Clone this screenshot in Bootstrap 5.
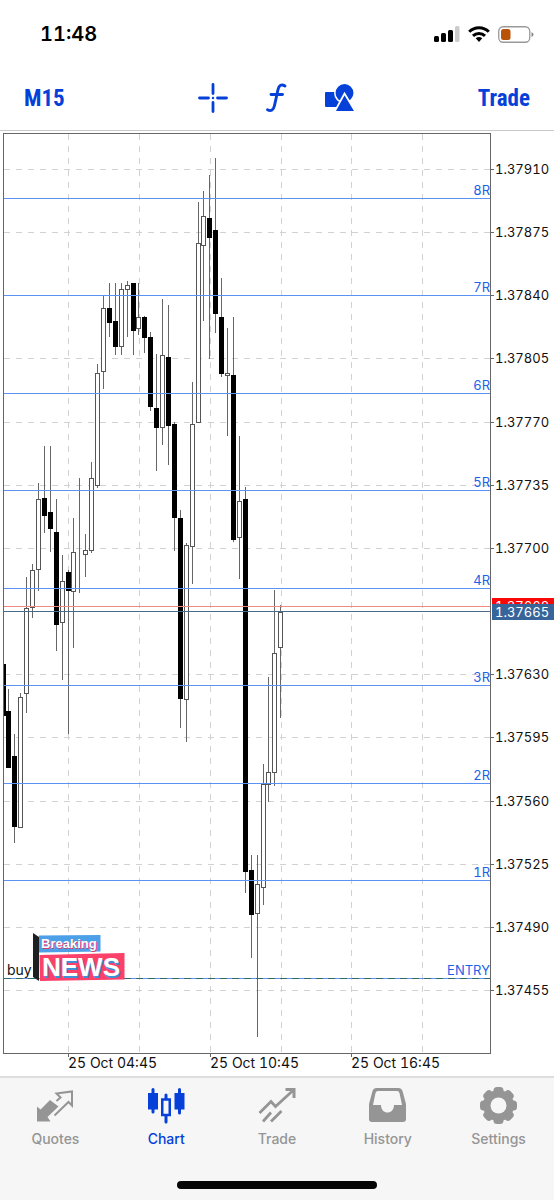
<!DOCTYPE html>
<html lang="en">
<head>
<meta charset="utf-8">
<meta name="viewport" content="width=device-width, initial-scale=1">
<title>Chart</title>
<link href="https://cdn.jsdelivr.net/npm/bootstrap@5.3.0/dist/css/bootstrap.min.css" rel="stylesheet">
<style>
  body { font-family: Inter, "Liberation Sans", sans-serif; color: #000; }
  .status-row { height: 68px; padding: 0 20px 0 40px; }
  .clock { font-size: 20px; line-height: 24px; font-weight: 600; font-variant-numeric: tabular-nums; }
  .tool-row { height: 63px; padding: 0 24px 2px; border-bottom: 1px solid #c9c9cb; }
  .tool-btn { color: #0540d9; line-height: 24px; }
  .tool-text { font-family: "Liberation Sans Narrow", "Roboto Condensed", Roboto, sans-serif; font-size: 23px; font-weight: 700; }
  .side { flex: 1 1 0; }
  .tools { gap: 32px; }
  .chart text { font-size: 14px; fill: #111; font-variant-numeric: tabular-nums; }
  .chart .price { font-size: 13px; }
  .chart .level { font-size: 13px; fill: #1a62e8; }
  .chart .tag { fill: #fff; }
  .chart .banner { font-family: "Liberation Sans", sans-serif; font-weight: 700; fill: #fff; }
  .chart .banner-top { font-size: 13px; text-shadow: 1px 1px 0 #d8416b; }
  .chart .banner-main { font-size: 26px; text-shadow: 1px 2px 0 #3f8fd8; }
  .tab-row { background: #f6f6f6; border-top: 2px solid #dedee0; }
  .tab-link { color: #959595; font-size: 14px; line-height: 20px; font-weight: 500; padding: 8px 0 0; gap: 3px; }
  .tab-link.active { color: #0540d9; }
  .home-bar { width: 36%; height: 8px; background: #050505; margin: 32px auto 11px; }
</style>
</head>
<body class="bg-white d-flex flex-column min-vh-100">
<header>
  <div class="status-row d-flex align-items-center justify-content-between">
    <span class="clock">11:48</span>
    <div class="d-flex align-items-center gap-2">
      <svg width="26" height="16" viewBox="0 0 26 16" role="img" aria-label="Signal">
        <rect x="0" y="10" width="5" height="6" rx="1.5"/><rect x="7" y="7" width="5" height="9" rx="1.5"/><rect x="14" y="4" width="5" height="12" rx="1.5"/><rect x="21" y="0" width="4.500" height="16" rx="1.500" fill="#ccc"/>
      </svg>
      <svg width="22" height="16" viewBox="0 0 22 16" role="img" aria-label="Wi-Fi">
        <g fill="none" stroke="#000" stroke-width="3"><path d="M1.200 5.800C6.500 .3 15.500 .3 20.800 5.800"/><path d="M5 9.900C8.300 6.600 13.700 6.600 17 9.900"/></g><path d="M7.700 12.300Q11 9.600 14.300 12.300L11 16Z"/>
      </svg>
      <svg width="36" height="17" viewBox="0 0 36 17" role="img" aria-label="Battery">
        <rect x=".75" y=".75" width="31" height="15.500" rx="4.500" fill="none" stroke="#999" stroke-width="1.300"/><rect x="3" y="3" width="9.500" height="11" rx="2.500" fill="#b95308"/><path d="M33.500 6v5q2-1 2-2.500T33.500 6" fill="#888"/>
      </svg>
    </div>
  </div>
  <div class="tool-row d-flex align-items-center">
    <div class="side"><button type="button" class="btn p-0 border-0 tool-btn tool-text">M15</button></div>
    <div class="tools d-flex align-items-center">
      <button type="button" class="btn p-0 border-0 tool-btn d-flex" aria-label="Crosshair">
        <svg width="32" height="32" viewBox="0 0 32 32" fill="none" stroke="currentColor" stroke-width="2.800" stroke-linecap="round"><path d="M16 2.500v9M16 20.500v9M2.500 16h9M20.500 16h9"/><circle cx="16" cy="16" r="1.200" fill="currentColor" stroke="none"/></svg>
      </button>
      <button type="button" class="btn p-0 border-0 tool-btn d-flex" aria-label="Indicators">
        <svg width="32" height="32" viewBox="0 0 32 32" fill="none" stroke="currentColor" stroke-width="2.900" stroke-linecap="round"><path d="M24 4C20.500 1.700 17.900 3.300 17 7.500L13.500 23.500C12.500 28 10 29.800 6.500 27.800M10 12.500H21.500"/></svg>
      </button>
      <button type="button" class="btn p-0 border-0 tool-btn d-flex" aria-label="Objects">
        <svg width="32" height="32" viewBox="0 0 32 32" fill="currentColor"><rect x="0" y="10" width="16" height="15" rx="1"/><circle cx="19.500" cy="11" r="9.700" stroke="#fff" stroke-width="1.500"/><path d="M19.500 11.500L30.500 29.800H9.500Z" stroke="#fff" stroke-width="1.800"/></svg>
      </button>
    </div>
    <div class="side text-end"><button type="button" class="btn p-0 border-0 tool-btn tool-text">Trade</button></div>
  </div>
</header>

<main class="flex-grow-1">
  <svg class="chart w-100 d-block" viewBox="0 131 554 945" role="img" aria-label="M15 price chart">
    <g id="grid" stroke="#d2d2d2" stroke-dasharray="6 6"></g>
    <g id="candles" stroke-width="1"></g>
    <g id="levels"></g>
    <path d="M4 606.500H490" stroke="#f08a84"/>
    <path d="M4 611.500H490" stroke="#4a6c8c"/>
    <path d="M4 978.500H490" stroke="#2f6b6b" stroke-dasharray="7 5"/>
    <rect x="3.500" y="133.500" width="487" height="920" fill="none" stroke="#666"/>
    <g id="axis"></g>
    <g>
      <rect x="492" y="598" width="62" height="16" fill="#f80808"/>
      <text class="price tag" x="495" y="611">1.37668</text>
      <rect x="492" y="604" width="62" height="16" fill="#37659a"/>
      <text class="price tag" x="495" y="617">1.37665</text>
    </g>
    <g>
      <text x="7" y="975">buy</text>
      <path d="M33 933l6 4v44l-6-4z" fill="#1d1f21"/>
      <path d="M39 935.500l61.500-.5v16.500L39 952.500z" fill="#4da0e8"/>
      <path d="M39.500 955l85-2v26.500L40 981z" fill="#fb4169"/>
      <text class="banner banner-top" x="41" y="948">Breaking</text>
      <text class="banner banner-main" x="42" y="976">NEWS</text>
    </g>
  </svg>
</main>

<footer class="tab-row">
  <nav class="row g-0 text-center">
    <a href="#quotes" class="col tab-link text-decoration-none d-flex flex-column align-items-center">
      <svg width="40" height="40" viewBox="0 0 40 40"><path d="M2 20.500L5.500 23.500L15 14L23.500 20.500L12.500 31L15.500 35.500H2Z" fill="currentColor"/><path d="M19.500 29.500L33.500 16L37 19.500V5.500L21.500 7.500L25.500 11.500L21.500 15" fill="none" stroke="currentColor" stroke-width="2"/></svg>
      <span>Quotes</span>
    </a>
    <a href="#chart" class="col tab-link active text-decoration-none d-flex flex-column align-items-center" aria-current="page">
      <svg width="40" height="40" viewBox="0 0 40 40" fill="currentColor" stroke="currentColor" stroke-linecap="round" stroke-width="3"><path d="M7 3.500V26M20 9v6M20 27v9M33.500 3.500V27"/><rect x="3" y="8" width="8" height="14.500" stroke-width="2"/><rect x="29.500" y="8" width="8" height="14.500" stroke-width="2"/><rect x="16.250" y="13.500" width="7.500" height="15.500" fill="#f6f6f6" stroke-width="2.500"/></svg>
      <span>Chart</span>
    </a>
    <a href="#trade" class="col tab-link text-decoration-none d-flex flex-column align-items-center">
      <svg width="40" height="40" viewBox="0 0 40 40" fill="none" stroke="currentColor" stroke-width="2.800"><path d="M2.500 27L14 15.500L18.500 20.500L36.500 4"/><path d="M28.500 3.500H37V12" stroke-width="3"/><path d="M6 35.500L14 26.500M14 35.500L24.500 25"/></svg>
      <span>Trade</span>
    </a>
    <a href="#history" class="col tab-link text-decoration-none d-flex flex-column align-items-center">
      <svg width="40" height="40" viewBox="0 0 40 40" fill="currentColor"><path fill-rule="evenodd" d="M8.500 2H30.500Q33.500 2 34.500 5L38 18V33Q38 36 35 36H4Q1 36 1 33V18L4.500 5Q5.500 2 8.500 2ZM10 5Q8 5 7.500 7L5 19H13C13 29 26 29 26 19H34L31.500 7Q31 5 29 5Z"/></svg>
      <span>History</span>
    </a>
    <a href="#settings" class="col tab-link text-decoration-none d-flex flex-column align-items-center">
      <svg width="40" height="40" viewBox="0 0 40 40" fill="currentColor"><g id="tooth"><rect x="14.500" y="1" width="10" height="9" rx="3.500"/><rect x="14.500" y="29" width="10" height="9" rx="3.500"/></g><use href="#tooth" transform="rotate(45 19.500 19.500)"/><use href="#tooth" transform="rotate(90 19.500 19.500)"/><use href="#tooth" transform="rotate(135 19.500 19.500)"/><circle cx="19.500" cy="19.500" r="15.500"/><circle cx="19.500" cy="19.500" r="8" fill="#f6f6f6"/></svg>
      <span>Settings</span>
    </a>
  </nav>
  <div class="home-bar rounded-pill"></div>
</footer>

<script src="https://cdn.jsdelivr.net/npm/bootstrap@5.3.0/dist/js/bootstrap.bundle.min.js"></script>
<script>
  // Each candle: high, body top, body bottom, low, falling (1) or rising (0)
  const candles = [
    [664,664,715,715,1],[689,711,767,767,1],[734,756,826,843,1],[693,697,827,828,0],
    [577,608,693,713,0],[564,570,607,618,0],[483,499,569,591,0],[446,498,515,533,1],
    [446,512,528,552,1],[499,532,624,651,1],[555,581,622,680,0],[570,572,590,734,1],
    [518,552,591,648,0],[478,554,554,593,0],[534,550,554,577,0],[462,478,550,553,0],
    [364,373,485,488,0],[296,308,371,389,0],[283,308,322,337,1],[283,321,346,355,1],
    [283,289,346,355,0],[281,285,289,337,0],[283,283,330,355,1],[283,317,328,335,0],
    [316,317,337,353,1],[332,337,406,411,1],[354,408,427,471,1],[299,355,427,445,0],
    [305,357,425,465,1],[422,424,517,551,1],[510,518,698,728,1],[543,545,699,742,0],
    [382,424,546,584,0],[202,243,422,422,0],[191,216,245,321,0],[175,218,237,359,1],
    [158,230,313,333,1],[278,317,373,377,1],[328,373,375,436,0],[317,375,539,542,1],
    [436,501,537,579,0],[487,499,871,893,1],[855,870,914,958,1],[855,884,913,1037,0],
    [764,784,887,905,0],[677,772,784,802,0],[590,653,772,786,0],[605,612,647,718,0]
  ];
  const draw = (id, markup) => { document.getElementById(id).innerHTML = markup; };

  draw('candles', candles.map(([high, top, bottom, low, falling], i) => {
    const x = Math.floor(3 + i * 5.91) + 0.5;
    const left = Math.max(x - 2, 3.5), width = x + 2 - left;
    return `<path d="M${x} ${high}V${low}" stroke="#666"/>` +
      `<rect x="${left}" y="${top + 0.5}" width="${width}" height="${bottom - top}" fill="${falling ? '#000' : '#fff'}" stroke="${falling ? '#000' : '#555'}"/>`;
  }).join(''));

  let grid = '', axis = '', levels = '';
  [68, 139, 210, 281, 351, 422].forEach(x => { grid += `<path d="M${x}.5 134V1053"/>`; });
  for (let i = 0; i < 14; i++) {
    const y = Math.round(169 + i * 63.15);
    if (i === 7) continue;
    if (i !== 2) grid += `<path d="M4 ${y}.5H490"/>`;
    axis += `<path d="M491 ${y}.5h3" stroke="#666"/><text class="price" x="495" y="${y + 5}">${(1.3791 - i * 0.00035).toFixed(5)}</text>`;
  }
  [[68, '04:45'], [210, '10:45'], [351, '16:45']].forEach(([x, time]) => {
    axis += `<path d="M${x}.5 1054v3" stroke="#666"/><text x="${x}" y="1068">25 Oct ${time}</text>`;
  });
  for (let i = 0; i < 9; i++) {
    const y = Math.floor(198 + i * 97.5);
    levels += `<path d="M4 ${y}.5H490" stroke="#5c92f2"/><text class="level" text-anchor="end" x="490" y="${y - 3}">${i < 8 ? 8 - i + 'R' : 'ENTRY'}</text>`;
  }
  draw('grid', grid); draw('axis', axis); draw('levels', levels);
</script>
</body>
</html>
